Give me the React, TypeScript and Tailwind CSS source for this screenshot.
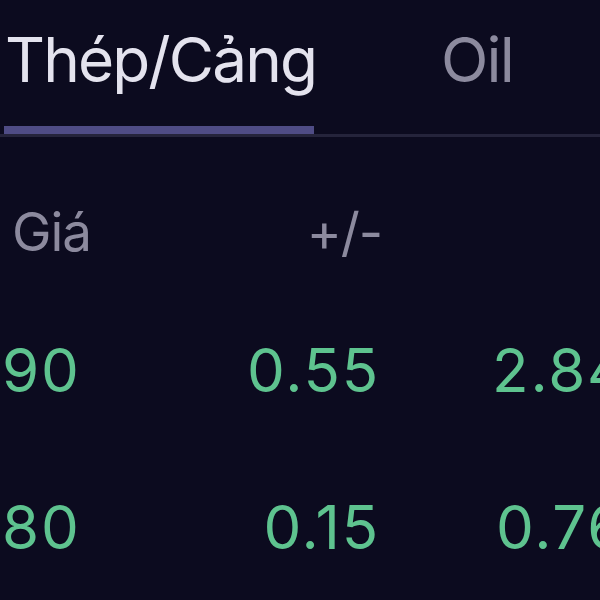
export default function App() {
  return (
    <div className="w-[600px] h-[600px] overflow-hidden bg-[#0c0b1f] font-['Inter','Liberation_Sans',sans-serif]">
      {/* Tabs */}
      <div className="flex items-end border-b-[3px] border-[#25243b] pt-[29px]">
        <div className="w-[310px] ml-[4px] flex flex-col shrink-0">
          <span className="text-[62px] leading-none tracking-[-0.03em] text-[#e4e3ee] whitespace-nowrap pl-[1px]">Thép/Cảng</span>
          <div className="mt-[35px] h-[8px] bg-[#4f4c85]"></div>
        </div>
        <div className="ml-[127px] self-start">
          <span className="text-[62px] leading-none tracking-[-0.03em] text-[#8c8a9e]">Oil</span>
        </div>
      </div>

      {/* Header */}
      <div className="flex mt-[69px] text-[53px] leading-none text-[#8c8a9e] tracking-[-0.02em]">
        <div className="w-[200px] shrink-0 pl-[12px]">Giá</div>
        <div className="w-[182px] shrink-0 text-right">+/-</div>
      </div>

      {/* Rows */}
      <div className="flex flex-col mt-[81px] gap-[97px] text-[60px] leading-none text-[#5ec38f] tracking-[0.03em]">
        <div className="flex whitespace-nowrap">
          <div className="w-[200px] shrink-0 pl-[2px]">90</div>
          <div className="w-[180px] shrink-0 text-right">0.55</div>
          <div className="ml-[112px] shrink-0">2.84</div>
        </div>
        <div className="flex whitespace-nowrap">
          <div className="w-[200px] shrink-0 pl-[2px]">80</div>
          <div className="w-[180px] shrink-0 text-right">0.15</div>
          <div className="ml-[116px] shrink-0">0.76</div>
        </div>
      </div>
    </div>
  );
}
